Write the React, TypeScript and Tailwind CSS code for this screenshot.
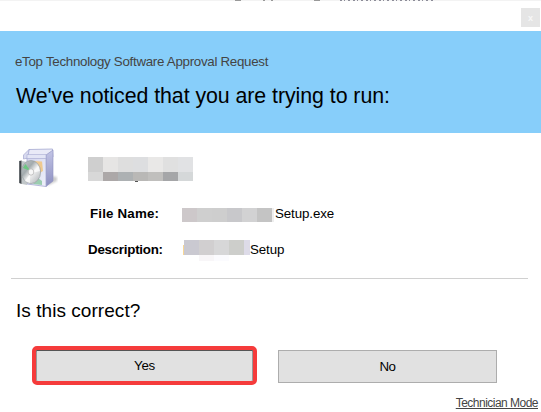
import React from "react";

const titleTop = ["bg-[#cfcfcf]", "bg-[#e6e5e4]", "bg-[#dedede]", "bg-[#dddee0]", "bg-[#e9e8e7]", "bg-[#e0e0e0]", "bg-[#e1e2e4]"];
const titleBottom = ["bg-[#d8d8d8]", "bg-[#aca8a8]", "bg-[#adb1b3]", "bg-[#b9b8b6]", "bg-[#c0bfbd]", "bg-[#a5a6a8]", "bg-[#d5d8d9]"];
const fileBlocks = ["bg-[#cdc8ca]", "bg-[#cfcfcf]", "bg-[#cecece]", "bg-[#c8c8cb]", "bg-[#d2d2d3]", "bg-[#c4c4c4]"];
const descBlocks = ["bg-[#cac9d1]", "bg-[#d1cfd0]", "bg-[#d7d7d8]", "bg-[#cdcecb]"];

function Blocks({ colors, height }: { colors: string[]; height: string }) {
  return (
    <div className={"flex " + height}>
      {colors.map((c, i) => (
        <div key={i} className={"w-[15px] " + c} />
      ))}
    </div>
  );
}

function InstallerIcon() {
  return (
    <svg width="40" height="42" viewBox="0 0 40 42">
      <defs>
        <linearGradient id="front" x1="0" y1="0" x2="1" y2="1">
          <stop offset="0" stopColor="#d4d6ee" />
          <stop offset="1" stopColor="#eef0fa" />
        </linearGradient>
        <linearGradient id="side" x1="0" y1="0" x2="0" y2="1">
          <stop offset="0" stopColor="#c3c5e6" />
          <stop offset="1" stopColor="#8c8fc0" />
        </linearGradient>
        <linearGradient id="disc" x1="0" y1="0" x2="1" y2="1">
          <stop offset="0" stopColor="#c2c9cc" />
          <stop offset=".35" stopColor="#a3abae" />
          <stop offset=".55" stopColor="#f1f1f1" />
          <stop offset="1" stopColor="#a9aeb3" />
        </linearGradient>
        <filter id="soft" x="-20%" y="-20%" width="140%" height="140%">
          <feGaussianBlur stdDeviation=".6" />
        </filter>
        <filter id="shade" x="-50%" y="-50%" width="200%" height="200%">
          <feGaussianBlur stdDeviation="1.3" />
        </filter>
      </defs>
      <path d="M29 39L39 34V30L34 29Z" fill="#999" opacity=".5" filter="url(#shade)" />
      <g filter="url(#soft)">
        <path d="M11 2.5L34.5 2L35 10L28 13L9 12Z" fill="#e9eaf7" stroke="#a5a8d0" strokeWidth=".8" />
        <path d="M11 2.5L5.5 8V12L10 11Z" fill="#d8daef" stroke="#a5a8d0" strokeWidth=".7" />
        <path d="M28 8L35 3V34L28 39.5Z" fill="url(#side)" stroke="#8d90bf" strokeWidth=".6" />
        <path d="M9 11H28V39.5L9 37Z" fill="url(#front)" stroke="#a5a8d0" strokeWidth=".8" />
        <path d="M9 7.5H28V11.5H9Z" fill="#e3e5f5" stroke="#a9acd4" strokeWidth=".6" />
        <path d="M15 14L24 14.5L25 24L20 27Z" fill="#efc98f" />
        <path d="M20 31L24 34V38L15 37Z" fill="#9bcdb0" />
        <path d="M1.2 14L3.6 13.6V37L1.2 36Z" fill="#3f454a" />
        <path d="M4 14L9 15V38L4 37Z" fill="#c1c7c9" />
        <ellipse cx="13" cy="25" rx="9.6" ry="11.5" fill="url(#disc)" stroke="#989fa2" strokeWidth=".7" />
        <path d="M12.5 24L4.8 21L7.5 17Z" fill="#6dc681" />
        <path d="M14 26L20.5 19L22 24Z" fill="#fff" opacity=".75" />
        <path d="M12 27L7 34L12 36Z" fill="#fff" opacity=".7" />
        <ellipse cx="13" cy="25" rx="2.8" ry="3.2" fill="#f7f7f7" stroke="#b0b0b0" strokeWidth=".7" />
      </g>
    </svg>
  );
}

function WindowEdge() {
  return (
    <svg className="block h-px w-[541px] bg-[#f3f3f3]" viewBox="0 0 541 1" shapeRendering="crispEdges">
      <path d="M235 .5h6M263 .5h2M271 .5h2M314 .5h6" stroke="#999" />
      <path d="M340 .5h93" stroke="#8d8d99" strokeDasharray="2 2 1 3 2 3" />
    </svg>
  );
}

export default function App() {
  return (
    <div className="flex h-[412px] w-[541px] flex-col overflow-hidden bg-white font-['Liberation_Sans',Arial,sans-serif] text-[13.33px] leading-4 text-black">
      <WindowEdge />
      <div className="flex h-[30px] shrink-0 justify-end pt-[7px] pr-px">
        <button className="flex h-[19px] w-[19px] items-center justify-center bg-[#e5e5e5] text-[9px] font-bold text-[#f7f7f7]">x</button>
      </div>
      <header className="h-[102px] shrink-0 bg-[#87cefa] pt-[23px] pl-[15px]">
        <p className="tracking-[-0.29px] whitespace-nowrap text-[#444]">eTop Technology Software Approval Request</p>
        <h1 className="mt-[14px] ml-px text-[21.33px] leading-6 tracking-[-0.05px] whitespace-nowrap">We've noticed that you are trying to run:</h1>
      </header>
      <div className="flex h-[73px] shrink-0 pt-[14px] pl-[18px]">
        <InstallerIcon />
        <div className="ml-[30px] pt-[10px]">
          <Blocks colors={titleTop} height="h-[15px]" />
          <Blocks colors={titleBottom} height="h-[9px]" />
          <div className="ml-[47px] h-px w-[3px] bg-[#555]" />
        </div>
      </div>
      <div className="flex h-4 shrink-0 pl-[90px]">
        <span className="w-[92px] font-bold tracking-[0.18px]">File Name:</span>
        <div className="mt-[2px] flex h-[14px]">
          <Blocks colors={fileBlocks} height="h-[14px]" />
          <div className="w-[2px] bg-[#eee]" />
        </div>
        <span className="ml-px tracking-[-0.1px]">Setup.exe</span>
      </div>
      <div className="mt-5 flex h-4 shrink-0 pl-[88px]">
        <span className="w-[95px] font-bold tracking-[-0.25px]">Description:</span>
        <div className="mt-[3px] h-[10px] w-px bg-[#f8d795]" />
        <div className="-mt-[2px] h-[21px]">
          <div className="flex">
            <Blocks colors={descBlocks} height="h-[15px]" />
            <div className="w-[6px] bg-[#dddbe8]" />
          </div>
          <div className="ml-[15px] flex h-[6px]">
            <div className="w-[15px] bg-[#f8f6f8]" />
            <div className="w-[15px] bg-[#fbfbfe]" />
          </div>
        </div>
        <span className="tracking-[-0.1px]">Setup</span>
      </div>
      <hr className="mt-5 mr-[13px] ml-[11px] border-[#d0d0d0]" />
      <h2 className="mt-5 ml-4 text-[19px] leading-6 tracking-[0.05px]">Is this correct?</h2>
      <div className="mt-[23px] flex shrink-0 gap-[21px] pl-8">
        <button className="h-[39px] w-[225px] rounded-[5px] border-4 border-[#f53b3b] bg-[#e1e1e1] pt-px tracking-[-0.2px] shadow-[inset_0_1px_0_#555,inset_1px_0_0_#999,inset_-1px_0_0_#999]">Yes</button>
        <button className="mt-1 h-[33px] w-[219px] border border-[#adadad] bg-[#e1e1e1] pt-px tracking-[-0.4px]">No</button>
      </div>
      <a className="mt-[11px] mr-[3px] self-end text-[12px] leading-[14px] tracking-[-0.52px] text-[#444] underline">Technician Mode</a>
    </div>
  );
}
